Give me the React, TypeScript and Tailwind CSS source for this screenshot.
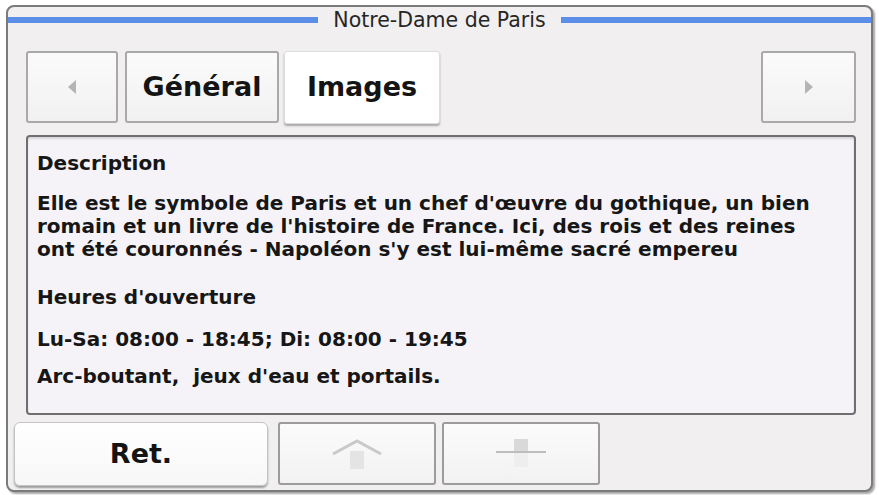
import React from 'react';

const Tri = ({ dir }: { dir: 'left' | 'right' }) => (
  <svg width="10" height="14" viewBox="0 0 10 14">
    {dir === 'left' ? (
      <polygon points="9,0 9,14 1,7" fill="#b4b4b4" />
    ) : (
      <polygon points="1,0 1,14 9,7" fill="#b4b4b4" />
    )}
  </svg>
);

const ArrowUp = () => (
  <svg width="52" height="32" viewBox="0 0 52 32">
    <polyline points="2,16 26,3 50,16" fill="none" stroke="#c9c9c9" strokeWidth="3" />
    <rect x="19" y="13" width="14" height="18" fill="#e4e4e4" />
  </svg>
);

const ArrowDown = () => (
  <svg width="52" height="32" viewBox="0 0 52 32">
    <rect x="19" y="1" width="14" height="13" fill="#d9d9d9" />
    <line x1="1" y1="14" x2="51" y2="14" stroke="#bdbdbd" strokeWidth="2" />
    <rect x="19" y="15" width="14" height="14" fill="#eeeeee" />
  </svg>
);

const tabText = "font-['DejaVu_Sans'] font-bold text-[27px] text-[#141414]";
const bodyText = "font-['DejaVu_Sans'] font-bold text-[20px] text-[#161616] whitespace-nowrap leading-[22px]";

export default function App() {
  return (
    <div className="w-[879px] h-[495px] bg-white pt-[5px] pl-[6px] overflow-hidden">
      <div className="w-[867px] h-[487px] rounded-[8px] border-2 border-[#7b7b7b] bg-[#f1eff0] shadow-[2px_2px_2px_rgba(0,0,0,0.35)] flex flex-col">
        {/* title bar */}
        <div className="h-[26px] flex items-center gap-[15px]">
          <div className="flex-1 h-[6px] bg-[#5b8ee6]" />
          <span className="font-['DejaVu_Sans'] text-[20.5px] text-[#262626] leading-none">Notre-Dame de Paris</span>
          <div className="flex-1 h-[6px] bg-[#5b8ee6]" />
        </div>

        {/* tabs */}
        <div className="mt-[18px] pl-[18px] pr-[15px] flex items-start h-[73px]">
          <div className="w-[92px] h-[72px] border-2 border-[#a9a9a9] rounded-[3px] bg-gradient-to-b from-[#fbfbfb] to-[#f1f1f1] flex items-center justify-center">
            <Tri dir="left" />
          </div>
          <div className="ml-[7px] w-[154px] h-[72px] border-2 border-[#a9a9a9] rounded-[3px] bg-gradient-to-b from-[#fbfbfb] to-[#f1f1f1] flex items-center justify-center">
            <span className={tabText}>Général</span>
          </div>
          <div className="ml-[5px] w-[156px] h-[73px] border border-[#dddddd] rounded-[3px] bg-white shadow-[0_2px_2px_rgba(0,0,0,0.3)] flex items-center justify-center">
            <span className={tabText}>Images</span>
          </div>
          <div className="flex-1" />
          <div className="w-[95px] h-[72px] border-2 border-[#a9a9a9] rounded-[3px] bg-gradient-to-b from-[#fbfbfb] to-[#f1f1f1] flex items-center justify-center">
            <Tri dir="right" />
          </div>
        </div>

        {/* description panel */}
        <div className="mt-[11px] ml-[18px] mr-[15px] h-[280px] border-2 border-[#6f6f6f] rounded-[4px] bg-[#f5f3f7] shadow-[inset_0_2px_2px_rgba(0,0,0,0.12)] pl-[9px] pt-[15px]">
          <div className={bodyText}>Description</div>
          <div className={bodyText + ' mt-[18px] leading-[23px]'}>
            <div>Elle est le symbole de Paris et un chef d'œuvre du gothique, un bien</div>
            <div>romain et un livre de l'histoire de France. Ici, des rois et des reines</div>
            <div>ont été couronnés - Napoléon s'y est lui-même sacré empereu</div>
          </div>
          <div className={bodyText + ' mt-[25px]'}>Heures d'ouverture</div>
          <div className={bodyText + ' mt-[20px]'}>Lu-Sa: 08:00 - 18:45; Di: 08:00 - 19:45</div>
          <div className={bodyText + ' mt-[15px]'}>Arc-boutant,&nbsp; jeux d'eau et portails.</div>
        </div>

        {/* bottom buttons */}
        <div className="mt-[7px] pl-[6px] flex items-start">
          <div className="w-[254px] h-[64px] border border-[#c4c4c4] rounded-[6px] bg-gradient-to-b from-white to-[#f7f7f7] shadow-[0_2px_2px_rgba(0,0,0,0.35)] flex items-center justify-center">
            <span className={tabText}>Ret.</span>
          </div>
          <div className="ml-[10px] w-[158px] h-[63px] border-2 border-[#9c9c9c] rounded-[3px] bg-gradient-to-b from-[#fbfbfb] to-[#f2f2f2] flex items-center justify-center">
            <ArrowUp />
          </div>
          <div className="ml-[6px] w-[158px] h-[63px] border-2 border-[#9c9c9c] rounded-[3px] bg-gradient-to-b from-[#fbfbfb] to-[#f2f2f2] flex items-center justify-center">
            <ArrowDown />
          </div>
        </div>
      </div>
    </div>
  );
}
